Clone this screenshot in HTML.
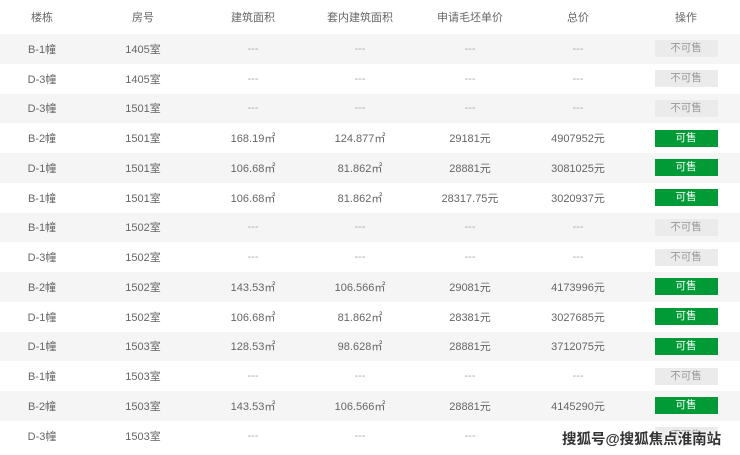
<!DOCTYPE html>
<html><head><meta charset="utf-8"><style>
body{margin:0;width:740px;height:455px;overflow:hidden;background:#fff;font-family:"Liberation Sans","Noto Sans CJK SC",sans-serif;font-size:11px;color:#666;position:relative}
.r{display:flex;height:29.75px;align-items:center}
.h{height:34px}
.r:nth-child(even){background:#f5f5f5}
.c{text-align:center;white-space:nowrap}
.c1{width:84px}.c2{width:118px}.c3{width:102px}.c4{width:112px}.c5{width:108px}.c6{width:108px}.c7{width:108px}
.d{color:#aaa}
.b{display:inline-block;width:63px;height:17px;line-height:17px;font-size:10.5px}
.n{background:#ebebeb;color:#999}
.y{background:#009b36;color:#fff}
.wm{position:absolute;left:562px;top:428px;font-size:14.5px;font-weight:bold;color:#333;text-shadow:0 0 2px #fff,0 0 2px #fff,0 0 3px #fff}
</style></head><body>
<div>
<div class="r h"><div class="c c1">楼栋</div><div class="c c2">房号</div><div class="c c3">建筑面积</div><div class="c c4">套内建筑面积</div><div class="c c5">申请毛坯单价</div><div class="c c6">总价</div><div class="c c7">操作</div></div>
<div class="r"><div class="c c1">B-1幢</div><div class="c c2">1405室</div><div class="c c3 d">---</div><div class="c c4 d">---</div><div class="c c5 d">---</div><div class="c c6 d">---</div><div class="c c7"><span class="b n">不可售</span></div></div>
<div class="r"><div class="c c1">D-3幢</div><div class="c c2">1405室</div><div class="c c3 d">---</div><div class="c c4 d">---</div><div class="c c5 d">---</div><div class="c c6 d">---</div><div class="c c7"><span class="b n">不可售</span></div></div>
<div class="r"><div class="c c1">D-3幢</div><div class="c c2">1501室</div><div class="c c3 d">---</div><div class="c c4 d">---</div><div class="c c5 d">---</div><div class="c c6 d">---</div><div class="c c7"><span class="b n">不可售</span></div></div>
<div class="r"><div class="c c1">B-2幢</div><div class="c c2">1501室</div><div class="c c3">168.19㎡</div><div class="c c4">124.877㎡</div><div class="c c5">29181元</div><div class="c c6">4907952元</div><div class="c c7"><span class="b y">可售</span></div></div>
<div class="r"><div class="c c1">D-1幢</div><div class="c c2">1501室</div><div class="c c3">106.68㎡</div><div class="c c4">81.862㎡</div><div class="c c5">28881元</div><div class="c c6">3081025元</div><div class="c c7"><span class="b y">可售</span></div></div>
<div class="r"><div class="c c1">B-1幢</div><div class="c c2">1501室</div><div class="c c3">106.68㎡</div><div class="c c4">81.862㎡</div><div class="c c5">28317.75元</div><div class="c c6">3020937元</div><div class="c c7"><span class="b y">可售</span></div></div>
<div class="r"><div class="c c1">B-1幢</div><div class="c c2">1502室</div><div class="c c3 d">---</div><div class="c c4 d">---</div><div class="c c5 d">---</div><div class="c c6 d">---</div><div class="c c7"><span class="b n">不可售</span></div></div>
<div class="r"><div class="c c1">D-3幢</div><div class="c c2">1502室</div><div class="c c3 d">---</div><div class="c c4 d">---</div><div class="c c5 d">---</div><div class="c c6 d">---</div><div class="c c7"><span class="b n">不可售</span></div></div>
<div class="r"><div class="c c1">B-2幢</div><div class="c c2">1502室</div><div class="c c3">143.53㎡</div><div class="c c4">106.566㎡</div><div class="c c5">29081元</div><div class="c c6">4173996元</div><div class="c c7"><span class="b y">可售</span></div></div>
<div class="r"><div class="c c1">D-1幢</div><div class="c c2">1502室</div><div class="c c3">106.68㎡</div><div class="c c4">81.862㎡</div><div class="c c5">28381元</div><div class="c c6">3027685元</div><div class="c c7"><span class="b y">可售</span></div></div>
<div class="r"><div class="c c1">D-1幢</div><div class="c c2">1503室</div><div class="c c3">128.53㎡</div><div class="c c4">98.628㎡</div><div class="c c5">28881元</div><div class="c c6">3712075元</div><div class="c c7"><span class="b y">可售</span></div></div>
<div class="r"><div class="c c1">B-1幢</div><div class="c c2">1503室</div><div class="c c3 d">---</div><div class="c c4 d">---</div><div class="c c5 d">---</div><div class="c c6 d">---</div><div class="c c7"><span class="b n">不可售</span></div></div>
<div class="r"><div class="c c1">B-2幢</div><div class="c c2">1503室</div><div class="c c3">143.53㎡</div><div class="c c4">106.566㎡</div><div class="c c5">28881元</div><div class="c c6">4145290元</div><div class="c c7"><span class="b y">可售</span></div></div>
<div class="r"><div class="c c1">D-3幢</div><div class="c c2">1503室</div><div class="c c3 d">---</div><div class="c c4 d">---</div><div class="c c5 d">---</div><div class="c c6 d">---</div><div class="c c7"><span class="b n">不可售</span></div></div>
</div>
<div class="wm">搜狐号@搜狐焦点淮南站</div>
</body></html>
